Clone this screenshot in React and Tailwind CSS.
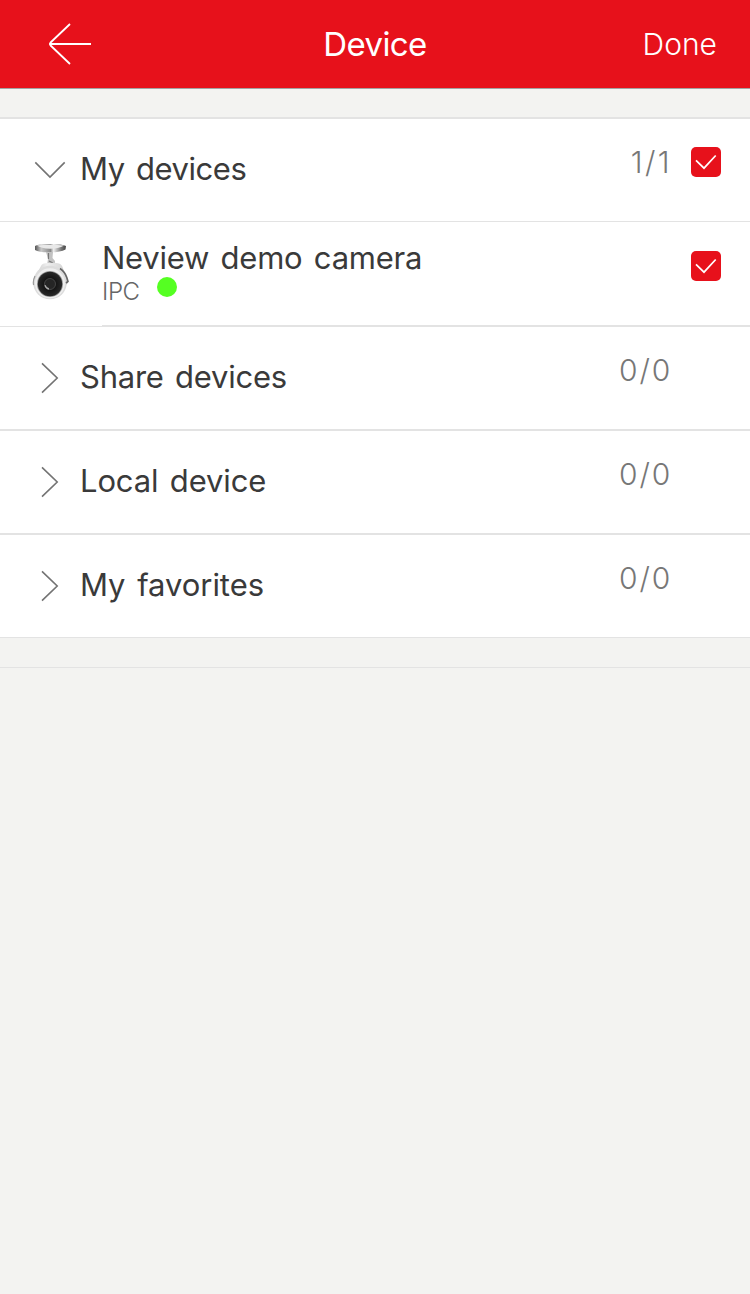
import { useState } from 'react';

const initialGroups = [
  {
    id: 'mine',
    name: 'My devices',
    count: '1/1',
    open: true,
    checked: true,
    row: 'h-[103px] border-b',
    track: 'tracking-[-0.45px]',
    countTrack: 'tracking-[2.4px]',
    devices: [{ id: 'demo', name: 'Neview demo camera', type: 'IPC', checked: true }],
  },
  { id: 'share', name: 'Share devices', count: '0/0', row: 'h-[104px] border-b-2', track: 'tracking-[-0.25px]', countTrack: 'tracking-[1.8px]', devices: [] },
  { id: 'local', name: 'Local device', count: '0/0', row: 'h-[104px] border-b-2', track: 'tracking-[-0.15px]', countTrack: 'tracking-[1.8px]', devices: [] },
  { id: 'favorites', name: 'My favorites', count: '0/0', row: 'h-[103px] border-b', track: 'tracking-[-0.05px]', countTrack: 'tracking-[1.8px]', devices: [] },
];

function BackArrow() {
  return (
    <svg width="44" height="44" viewBox="0 0 44 44" fill="none" stroke="#fff" strokeWidth="1.8">
      <path d="M22 2 L2.6 20.5 Q1.2 22 2.6 23.5 L22 42 M2 22 H43" />
    </svg>
  );
}

function Chevron({ open }) {
  return (
    <svg width="32" height="32" viewBox="0 0 32 32" fill="none" stroke="#737373" strokeWidth="1.6">
      {open ? <path d="M1.3 8.4 L16 23 L30.7 8.4" /> : <path d="M8 1.3 L23.2 16 L8 30.7" />}
    </svg>
  );
}

function CheckBox({ checked, onClick }) {
  if (!checked) return <span className="w-[30px]" />;
  return (
    <button type="button" onClick={onClick} className="w-[30px] h-[30px] rounded-[5px] bg-[#e7111b]">
      <svg width="30" height="30" viewBox="0 0 30 30" fill="none" stroke="#fff" strokeWidth="1.7">
        <path d="M5 13.3 L13 21.2 L24.7 8.5" />
      </svg>
    </button>
  );
}

function CameraIcon() {
  return (
    <svg width="38" height="58" viewBox="0 0 38 58">
      <defs>
        <linearGradient id="mount" x1="0" x2="1" y1="0" y2="0">
          <stop offset="0" stopColor="#555" />
          <stop offset="0.2" stopColor="#c8c8c8" />
          <stop offset="0.5" stopColor="#8a8a8a" />
          <stop offset="0.6" stopColor="#eee" />
          <stop offset="0.85" stopColor="#777" />
          <stop offset="1" stopColor="#444" />
        </linearGradient>
        <linearGradient id="body" x1="0" x2="1" y1="0" y2="0">
          <stop offset="0" stopColor="#c4c4c4" />
          <stop offset="0.4" stopColor="#eeeeee" />
          <stop offset="0.8" stopColor="#dadada" />
          <stop offset="1" stopColor="#b0b0b0" />
        </linearGradient>
        <radialGradient id="lens">
          <stop offset="0" stopColor="#222" />
          <stop offset="0.35" stopColor="#303030" />
          <stop offset="0.5" stopColor="#151515" />
          <stop offset="1" stopColor="#282828" />
        </radialGradient>
      </defs>
      <path d="M3 3 Q5 1 18 1 Q31 1 34 3 L33.5 6.5 Q28 9.5 18 9.3 Q7 9.5 3 7 Z" fill="url(#mount)" />
      <path d="M5 2.6 Q18 0.8 32 2.6 Q28 5.6 18 5.8 Q9 5.6 5 2.6 Z" fill="#e9e9e9" />
      <path d="M14 9 H21 L20.5 15 L23 18 V22 H15 L16 16 Z" fill="#c2c2c2" />
      <path d="M16.5 10 V16 M17 18 L21 20" stroke="#777" strokeWidth="1.2" />
      <path d="M9 23 Q10 19.5 18 20 Q28 19 30 23 L35 35 Q37 40 34 42 L2 42 Q0 38 3 34 Z" fill="url(#body)" />
      <circle cx="18" cy="39.5" r="16.8" fill="#dcdcdc" />
      <path d="M1.6 42 Q0.6 38 3 33" fill="none" stroke="#999" strokeWidth="1.2" />
      <path d="M28 25.5 Q33 29 34.8 34.5 L36 38.5 L34 40" fill="none" stroke="#666" strokeWidth="1.6" />
      <circle cx="18" cy="40.3" r="15" fill="#eeeeee" />
      <circle cx="18" cy="41" r="13" fill="#9a9a9a" />
      <circle cx="18" cy="41" r="12.2" fill="url(#lens)" />
      <circle cx="18" cy="41" r="5.5" fill="#252525" stroke="#4c4c4c" strokeWidth="0.8" />
      <path d="M13 42.2 Q14 45.4 17 46" fill="none" stroke="#aaa" strokeWidth="1.3" />
    </svg>
  );
}

function DeviceRow({ device, onCheck }) {
  return (
    <div className="h-[105px] flex flex-col">
      <div className="h-[103px] flex">
        <div className="w-[102px] pl-8 pt-[21px]">
          <CameraIcon />
        </div>
        <div className="flex-1 pt-4">
          <p className="text-[31px] leading-10 tracking-[-0.25px] [word-spacing:3px] whitespace-nowrap">{device.name}</p>
          <div className="flex items-start">
            <span className="w-[55px] pt-[2px] text-2xl leading-6 tracking-[-0.4px] font-light text-[#666]">{device.type}</span>
            <span className="w-5 h-5 -mt-px rounded-full bg-[#55ff22]" />
          </div>
        </div>
        <div className="pt-[29px] pr-[29px]">
          <CheckBox checked={device.checked} onClick={onCheck} />
        </div>
      </div>
      <div className="h-px ml-[102px] bg-[#e3e3e3]" />
      <div className="h-px bg-[#e3e3e3]" />
    </div>
  );
}

export default function App() {
  const [groups, setGroups] = useState(initialGroups);

  const toggleOpen = (id) => {
    setGroups(groups.map((g) => (g.id === id ? { ...g, open: !g.open } : g)));
  };

  return (
    <div className="min-h-screen bg-[#f3f3f1] font-['Inter',sans-serif] text-[#3a3a3a]">
      <header className="h-[89px] grid grid-cols-3 items-center bg-[#e7111b] border-b border-[#a3a3a3] text-white">
        <button type="button" className="pl-12">
          <BackArrow />
        </button>
        <h1 className="text-center text-[33px] leading-[44px] tracking-[-0.6px] font-normal">Device</h1>
        <button type="button" className="pr-[33px] text-right text-[30px] leading-[44px] font-light">Done</button>
      </header>

      <main className="mt-7 border-t-2 border-[#e3e3e3]">
        {groups.map((group) => (
          <section key={group.id} className="bg-white">
            <div className={`${group.row} flex items-start border-[#e3e3e3]`}>
              <button type="button" onClick={() => toggleOpen(group.id)} className="flex-1 flex items-start pl-[34px] pt-[29px]">
                <span className="pt-[6px]">
                  <Chevron open={group.open} />
                </span>
                <span className={`${group.track} ml-[14px] pt-px text-[31px] leading-10 [word-spacing:3px] whitespace-nowrap`}>{group.name}</span>
              </button>
              <span className={`${group.countTrack} pt-[25px] pr-[19px] text-[30px] leading-9 font-light text-[#777]`}>{group.count}</span>
              <div className="w-[59px] pt-7">
                <CheckBox checked={group.checked} />
              </div>
            </div>
            {group.open && group.devices.map((device) => <DeviceRow key={device.id} device={device} />)}
          </section>
        ))}
        <div className="h-[30px] border-b border-[#e3e3e3]" />
      </main>
    </div>
  );
}
